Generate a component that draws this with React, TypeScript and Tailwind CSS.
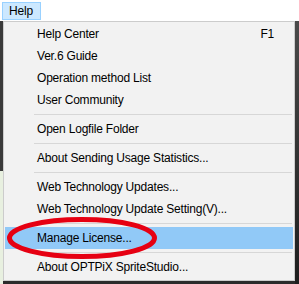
import React from "react";

type Item = { label?: string; shortcut?: string; sep?: boolean; active?: boolean };

const items: Item[] = [
  { label: "Help Center", shortcut: "F1" },
  { label: "Ver.6 Guide" },
  { label: "Operation method List" },
  { label: "User Community" },
  { sep: true },
  { label: "Open Logfile Folder" },
  { sep: true },
  { label: "About Sending Usage Statistics..." },
  { sep: true },
  { label: "Web Technology Updates..." },
  { label: "Web Technology Update Setting(V)..." },
  { sep: true },
  { label: "Manage License...", active: true },
  { sep: true },
  { label: "About OPTPiX SpriteStudio..." },
];

export default function App() {
  return (
    <div
      className="relative w-[299px] h-[284px] overflow-hidden bg-white text-[12px] tracking-[-0.2px] text-black"
      style={{ fontFamily: '"Liberation Sans", Arial, sans-serif' }}
    >
      {/* menu bar */}
      <div className="h-[21px] bg-white pl-[2px] pt-[2px]">
        <div className="w-[39px] h-[18px] bg-[#cce8ff] border border-[#99d1ff] flex items-center pl-[6px]">
          Help
        </div>
      </div>

      {/* background app strip + dropdown */}
      <div className="flex h-[263px] bg-[#2b2b2b]">
        <div className="w-[3px] flex flex-col">
          <div className="h-[150px] bg-[#3a3a3a]" />
          <div className="flex-1 bg-[#e8f0e0]" />
        </div>
        <div className="w-[292px] h-[260px] bg-[#f2f2f2] border border-[#cccccc] p-[1px]">
          {items.map((it, i) =>
            it.sep ? (
              <div key={i} className="h-[7px] flex items-center pl-[29px] pr-[1px]">
                <div className="h-px w-full bg-[#d7d7d7]" />
              </div>
            ) : (
              <div
                key={i}
                className={`h-[22px] flex items-center pl-[32px] pr-[19px] ${it.active ? "bg-[#91c9f7]" : ""}`}
              >
                <span className="flex-1">{it.label}</span>
                {it.shortcut && <span>{it.shortcut}</span>}
              </div>
            )
          )}
        </div>
        <div className="w-[4px] bg-gradient-to-b from-[#4a4a4a] to-[#1e1e1e]" />
      </div>

      {/* red annotation ellipse */}
      <svg className="absolute left-0 top-0 pointer-events-none" width="299" height="284">
        <ellipse cx="82" cy="238" rx="72.5" ry="18.5" fill="none" stroke="#e60012" strokeWidth="5" />
      </svg>
    </div>
  );
}
